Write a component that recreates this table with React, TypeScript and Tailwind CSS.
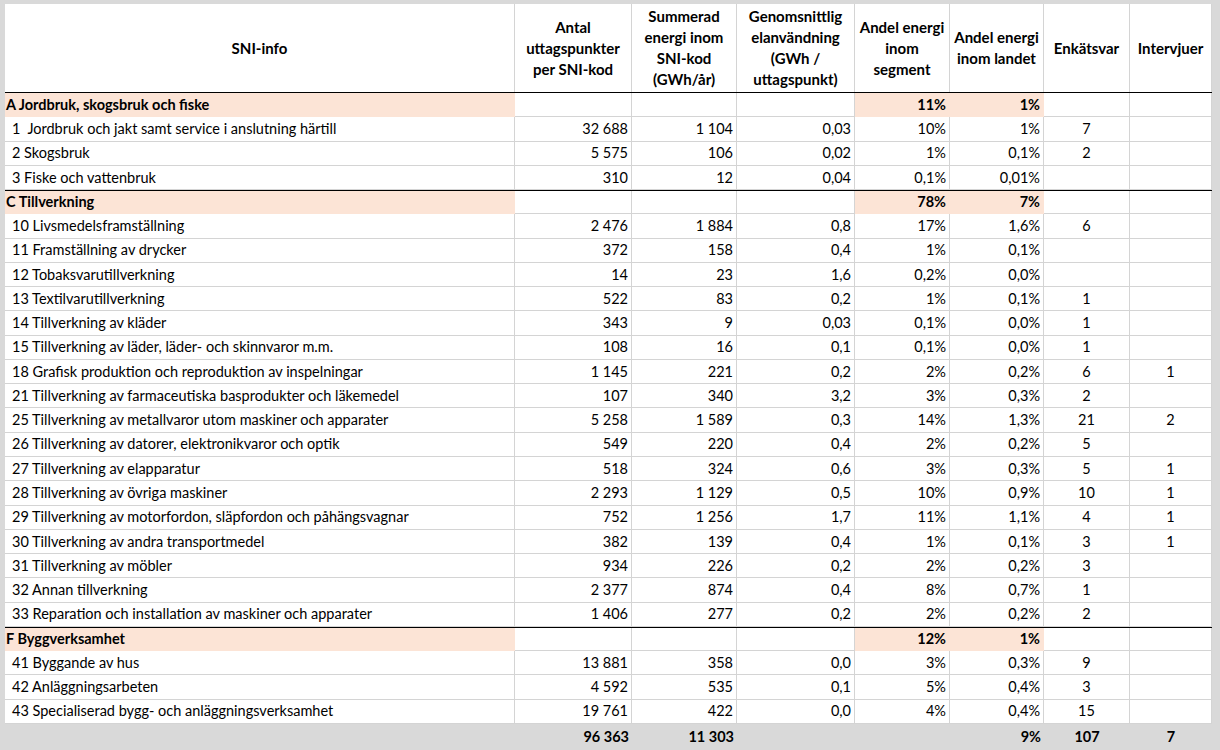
import type { ReactNode } from 'react';

type Row = {
  kind: 'cat' | 'item';
  label: string;
  v: string[];
  line?: boolean;
};

const cols = 'grid grid-cols-[510px_117px_105px_118px_95px_94px_86px_82px]';

const rows: Row[] = [
  { kind: 'cat', label: 'A Jordbruk, skogsbruk och fiske', v: ['', '', '', '11%', '1%', '', ''] },
  { kind: 'item', label: '1  Jordbruk och jakt samt service i anslutning härtill', v: ['32 688', '1 104', '0,03', '10%', '1%', '7', ''] },
  { kind: 'item', label: '2 Skogsbruk', v: ['5 575', '106', '0,02', '1%', '0,1%', '2', ''] },
  { kind: 'item', label: '3 Fiske och vattenbruk', v: ['310', '12', '0,04', '0,1%', '0,01%', '', ''] },
  { kind: 'cat', label: 'C Tillverkning', v: ['', '', '', '78%', '7%', '', ''], line: true },
  { kind: 'item', label: '10 Livsmedelsframställning', v: ['2 476', '1 884', '0,8', '17%', '1,6%', '6', ''] },
  { kind: 'item', label: '11 Framställning av drycker', v: ['372', '158', '0,4', '1%', '0,1%', '', ''] },
  { kind: 'item', label: '12 Tobaksvarutillverkning', v: ['14', '23', '1,6', '0,2%', '0,0%', '', ''] },
  { kind: 'item', label: '13 Textilvarutillverkning', v: ['522', '83', '0,2', '1%', '0,1%', '1', ''] },
  { kind: 'item', label: '14 Tillverkning av kläder', v: ['343', '9', '0,03', '0,1%', '0,0%', '1', ''] },
  { kind: 'item', label: '15 Tillverkning av läder, läder- och skinnvaror m.m.', v: ['108', '16', '0,1', '0,1%', '0,0%', '1', ''] },
  { kind: 'item', label: '18 Grafisk produktion och reproduktion av inspelningar', v: ['1 145', '221', '0,2', '2%', '0,2%', '6', '1'] },
  { kind: 'item', label: '21 Tillverkning av farmaceutiska basprodukter och läkemedel', v: ['107', '340', '3,2', '3%', '0,3%', '2', ''] },
  { kind: 'item', label: '25 Tillverkning av metallvaror utom maskiner och apparater', v: ['5 258', '1 589', '0,3', '14%', '1,3%', '21', '2'] },
  { kind: 'item', label: '26 Tillverkning av datorer, elektronikvaror och optik', v: ['549', '220', '0,4', '2%', '0,2%', '5', ''] },
  { kind: 'item', label: '27 Tillverkning av elapparatur', v: ['518', '324', '0,6', '3%', '0,3%', '5', '1'] },
  { kind: 'item', label: '28 Tillverkning av övriga maskiner', v: ['2 293', '1 129', '0,5', '10%', '0,9%', '10', '1'] },
  { kind: 'item', label: '29 Tillverkning av motorfordon, släpfordon och påhängsvagnar', v: ['752', '1 256', '1,7', '11%', '1,1%', '4', '1'] },
  { kind: 'item', label: '30 Tillverkning av andra transportmedel', v: ['382', '139', '0,4', '1%', '0,1%', '3', '1'] },
  { kind: 'item', label: '31 Tillverkning av möbler', v: ['934', '226', '0,2', '2%', '0,2%', '3', ''] },
  { kind: 'item', label: '32 Annan tillverkning', v: ['2 377', '874', '0,4', '8%', '0,7%', '1', ''] },
  { kind: 'item', label: '33 Reparation och installation av maskiner och apparater', v: ['1 406', '277', '0,2', '2%', '0,2%', '2', ''] },
  { kind: 'cat', label: 'F Byggverksamhet', v: ['', '', '', '12%', '1%', '', ''], line: true },
  { kind: 'item', label: '41 Byggande av hus', v: ['13 881', '358', '0,0', '3%', '0,3%', '9', ''] },
  { kind: 'item', label: '42 Anläggningsarbeten', v: ['4 592', '535', '0,1', '5%', '0,4%', '3', ''] },
  { kind: 'item', label: '43 Specialiserad bygg- och anläggningsverksamhet', v: ['19 761', '422', '0,0', '4%', '0,4%', '15', ''] },
];

const headers = [
  ['SNI-info'],
  ['Antal', 'uttagspunkter', 'per SNI-kod'],
  ['Summerad', 'energi inom', 'SNI-kod', '(GWh/år)'],
  ['Genomsnittlig', 'elanvändning', '(GWh /', 'uttagspunkt)'],
  ['Andel energi', 'inom', 'segment'],
  ['Andel energi', 'inom landet'],
  ['Enkätsvar'],
  ['Intervjuer'],
];

function Cell({ children, className }: { children?: ReactNode; className: string }) {
  return <div className={`flex h-full items-center overflow-hidden whitespace-pre ${className}`}>{children}</div>;
}

function DataRow({ row }: { row: Row }) {
  const cat = row.kind === 'cat';
  const line = row.line ? 'border-t-[1.5px] border-t-black' : '';
  return (
    <div className={`${cols} h-[24.27px] ${line} ${cat ? 'font-bold' : ''}`}>
      <Cell className={`border-b border-r ${cat ? 'border-[#fce4d6] bg-[#fce4d6] pl-[1px]' : 'border-[#d4d4d4] pl-[7px]'}`}>
        {row.label}
      </Cell>
      {row.v.map((val, i) => {
        const peach = cat && (i === 3 || i === 4);
        const align = i === 5 || i === 6 ? 'justify-center' : 'justify-end pr-[3px]';
        const border = peach ? 'border-[#fce4d6] bg-[#fce4d6]' : 'border-[#d4d4d4]';
        return (
          <Cell key={i} className={`border-b border-r ${border} ${align}`}>
            {val}
          </Cell>
        );
      })}
    </div>
  );
}

export default function App() {
  return (
    <div className="h-[750px] w-[1220px] overflow-hidden bg-[#d9d9d9] pl-[5px] pt-[4px] font-['Lato',sans-serif] text-[14.5px] text-black">
      <div className="w-[1207px] bg-white">
        <div className={`${cols} h-[89px] border-b-[1.5px] border-b-black text-[15px] font-bold leading-[21px]`}>
          {headers.map((lines, i) => (
            <div key={i} className="flex flex-col items-center justify-center border-r border-[#d4d4d4] text-center">
              {lines.map((l) => (
                <span key={l}>{l}</span>
              ))}
            </div>
          ))}
        </div>
        {rows.map((row) => (
          <DataRow key={row.label} row={row} />
        ))}
      </div>
      <div className={`${cols} -ml-[5px] h-[26px] pl-[5px] font-bold`}>
        <Cell className="" />
        <Cell className="justify-end pr-[3px]">96 363</Cell>
        <Cell className="justify-end pr-[3px]">11 303</Cell>
        <Cell className="" />
        <Cell className="" />
        <Cell className="justify-end pr-[3px]">9%</Cell>
        <Cell className="justify-center">107</Cell>
        <Cell className="justify-center">7</Cell>
      </div>
    </div>
  );
}
